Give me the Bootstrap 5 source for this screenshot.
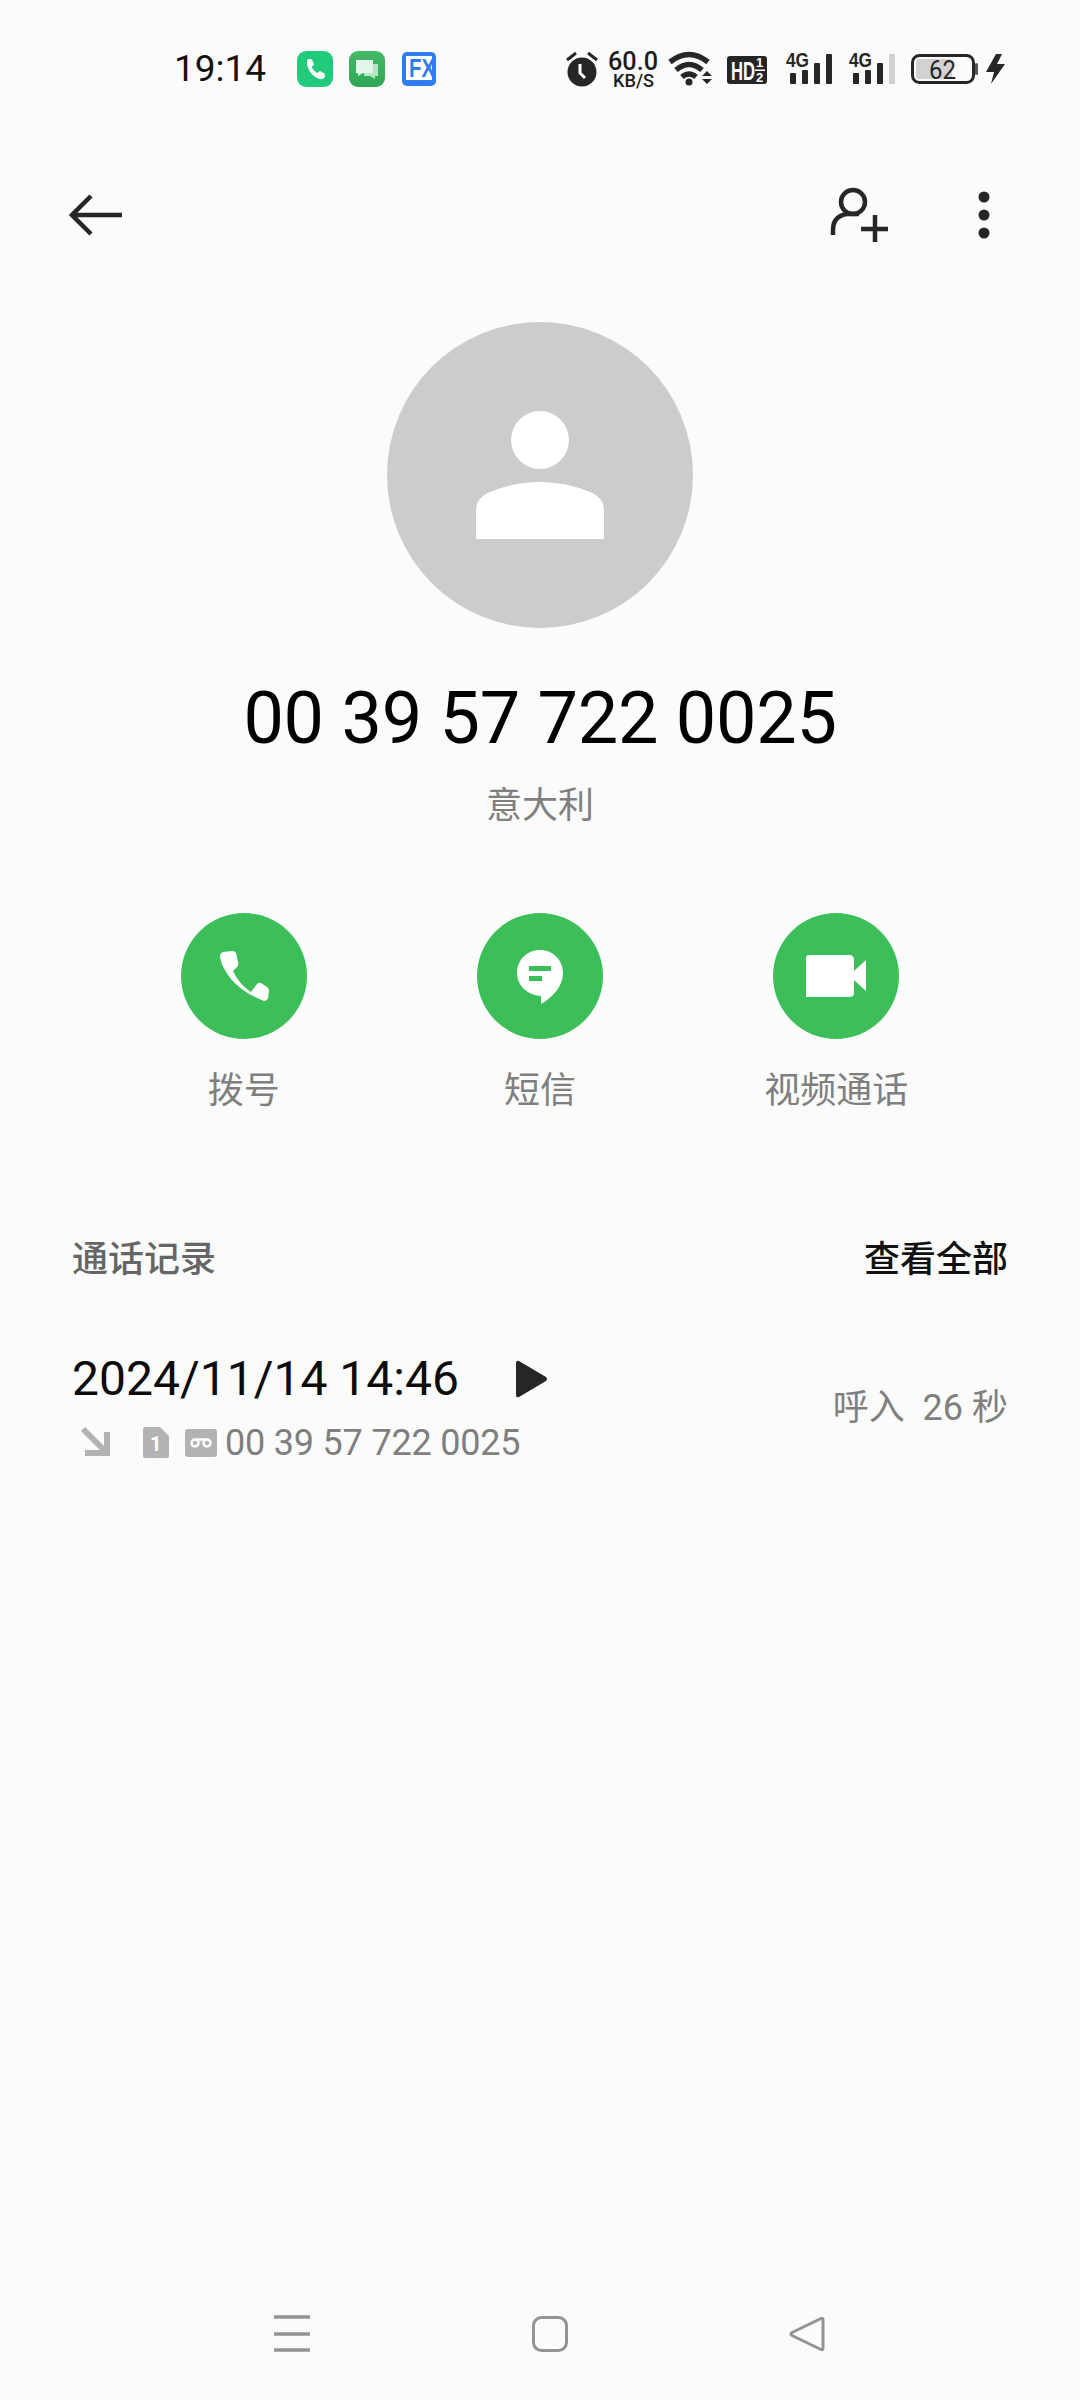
<!DOCTYPE html>
<html lang="zh-CN">
<head>
<meta charset="utf-8">
<title>通话详情</title>
<link href="https://cdn.jsdelivr.net/npm/bootstrap@5.3.0/dist/css/bootstrap.min.css" rel="stylesheet">
<style>
  :root { --ink: #000; --muted: #7f7f7f; --icon: #262626; --green: #3cbf58; }
  html, body { margin: 0; background: #fbfbfb; }
  body {
    width: 1080px; height: 2400px; overflow: hidden;
    font-family: Roboto, "Noto Sans CJK SC", sans-serif; color: var(--ink);
  }
  svg { display: block; flex: none; }
  .screen { height: 2400px; }

  /* status bar */
  .status-row { height: 80px; margin-top: 28px; padding: 0 70px 0 174px; }
  .clock { width: 94px; padding-top: 2px; font-size: 37px; line-height: 78px; color: #111; }
  .app-tray { margin-left: 29px; }
  .sys-tray { margin-left: auto; }
  .sb-rate { font: 500 25px Roboto, sans-serif; fill: #1c1c1c; }
  .sb-unit { font: 500 19px Roboto, sans-serif; fill: #1c1c1c; }
  .sb-net { font: 700 20px "Liberation Sans", sans-serif; fill: #262626; }
  .sb-hd { font: 700 25px "Liberation Sans", sans-serif; fill: #fff; }
  .sb-frac { font: 700 13px "Liberation Sans", sans-serif; fill: #fff; }
  .sb-batt { font: 400 26px Roboto, sans-serif; fill: #262626; }
  .sb-fx { font: 700 26px "Liberation Sans", sans-serif; fill: #2f7cf0; }

  /* toolbar */
  .tool-row { height: 80px; margin-top: 67px; padding: 0 90px 0 69px; }
  .tool-more { margin-left: 87px; }

  /* contact header */
  .face { width: 306px; height: 306px; margin: 67px auto 0; background: #cccccc; }
  .dial-number { font-size: 72px; line-height: 86px; margin-top: 48px; letter-spacing: -.25px; }
  .region { font-size: 36px; line-height: 50px; margin-top: 19px; color: var(--muted); }

  /* quick actions */
  .actions { margin-top: 82px; padding: 0 95.5px; }
  .action-disc { width: 126px; height: 126px; background: var(--green); }
  .action-label { font-size: 36px; line-height: 50px; margin-top: 27px; color: var(--muted); }

  /* call history */
  .history { padding: 0 72px; }
  .history-head { margin-top: 119px; font-size: 36px; line-height: 50px; font-weight: 500; }
  .history-title { color: #666; }
  .history-all { color: #111; }
  .log-entry { margin-top: 64px; }
  .log-when { font-size: 48px; line-height: 60px; color: #0c0c0c; }
  .log-play { margin-left: 56px; }
  .log-sub { margin-top: 12px; height: 44px; margin-left: 7px; }
  .log-sim { margin-left: 27px; }
  .log-mail { margin-left: 15px; }
  .log-number { font-size: 36px; line-height: 44px; color: var(--muted); margin-left: 8px; letter-spacing: -.2px; }
  .log-meta { font-size: 36px; line-height: 50px; color: var(--muted); white-space: pre; margin-top: 2px; }

  /* navigation keys */
  .nav-keys { margin-top: auto; height: 67px; margin-bottom: 34px; padding: 0 251px 0 270px; }
</style>
</head>
<body>
<div class="screen d-flex flex-column">

  <!-- status bar -->
  <div class="status-row d-flex align-items-center">
    <div class="clock">19:14</div>
    <div class="app-tray d-flex">
      <svg width="52" height="80" viewBox="297 28 52 80" aria-hidden="true">
        <rect x="297" y="51" width="36" height="36" rx="9" fill="#22cb7c"/>
        <path d="M307 60q1-1 3-1l2 .5 2 5-2.500 2.500q2 4 6 6l2.500-2 4.500 2.500.5 2q0 2-1.500 3-2 1-4 .5-6-2-10-8-3-6-2.500-9z" fill="#fff"/>
      </svg>
      <svg width="53" height="80" viewBox="349 28 53 80" aria-hidden="true">
        <defs><linearGradient id="chatFill" x1="0" y1="0" x2="0" y2="1"><stop offset="0" stop-color="#45bb68"/><stop offset="1" stop-color="#2ea655"/></linearGradient></defs>
        <rect x="349" y="51" width="36" height="36" rx="9" fill="url(#chatFill)"/>
        <path d="M364 64h14v12h-3v3l-5-3h-6z" fill="#b5e6c6"/>
        <path d="M356 60h17v13h-10l-5 3v-3h-2z" fill="#e3f6e9"/>
      </svg>
      <svg width="44" height="80" viewBox="402 28 44 80" role="img">
        <rect x="402" y="52" width="34" height="34" rx="5" fill="#2f7cf0"/>
        <rect x="406" y="56" width="26" height="24" fill="#fff"/>
        <text class="sb-fx" x="409" y="77" textLength="26" lengthAdjust="spacingAndGlyphs">FX</text>
      </svg>
    </div>
    <div class="sys-tray d-flex">
      <svg width="40" height="80" viewBox="565 28 40 80" aria-hidden="true">
        <circle cx="583" cy="72" r="14.500" fill="#262626"/>
        <path d="M568 60l9-7M598 60l-9-7" stroke="#262626" stroke-width="3" fill="none"/>
        <path d="M581 64v9l5 5" stroke="#fff" stroke-width="3" fill="none"/>
      </svg>
      <svg width="62" height="80" viewBox="605 28 62 80" role="img">
        <text class="sb-rate" x="609" y="70" textLength="50" lengthAdjust="spacingAndGlyphs">60.0</text>
        <text class="sb-unit" x="614" y="87" textLength="41" lengthAdjust="spacingAndGlyphs">KB/S</text>
      </svg>
      <svg width="59" height="80" viewBox="667 28 59 80" aria-hidden="true">
        <g fill="none" stroke="#262626" stroke-width="5.500">
          <path d="M671 62q19-15 38 0"/>
          <path d="M677 70q13-11 26 0"/>
          <path d="M683 77q7-6 14 0"/>
        </g>
        <circle cx="690" cy="82" r="3.500" fill="#262626"/>
        <path d="M703 76l5-5 5 5zM703 79h10l-5 5z" fill="#262626"/>
      </svg>
      <svg width="59" height="80" viewBox="726 28 59 80" role="img">
        <rect x="728" y="56" width="40" height="28" rx="3" fill="#262626"/>
        <text class="sb-hd" x="732" y="80" textLength="24" lengthAdjust="spacingAndGlyphs">HD</text>
        <text class="sb-frac" x="757" y="67">1</text>
        <text class="sb-frac" x="757" y="82">2</text>
        <rect x="756" y="69.500" width="10" height="1.500" fill="#fff"/>
      </svg>
      <svg width="63" height="80" viewBox="785 28 63 80" role="img">
        <text class="sb-net" x="787" y="67" textLength="23" lengthAdjust="spacingAndGlyphs">4G</text>
        <rect x="791" y="73" width="6" height="11" rx="1" fill="#262626"/>
        <rect x="803" y="70" width="6" height="14" rx="1" fill="#262626"/>
        <rect x="815" y="63" width="6" height="21" rx="1" fill="#262626"/>
        <rect x="827" y="54" width="6" height="30" rx="1" fill="#262626"/>
      </svg>
      <svg width="62" height="80" viewBox="848 28 62 80" role="img">
        <text class="sb-net" x="850" y="67" textLength="23" lengthAdjust="spacingAndGlyphs">4G</text>
        <rect x="854" y="73" width="6" height="11" rx="1" fill="#262626"/>
        <rect x="866" y="70" width="6" height="14" rx="1" fill="#262626"/>
        <rect x="878" y="63" width="6" height="21" rx="1" fill="#262626"/>
        <rect x="890" y="54" width="6" height="30" rx="1" fill="#d0d0d0"/>
      </svg>
      <svg width="75" height="80" viewBox="910 28 75 80" role="img">
        <rect x="913.500" y="55.500" width="61" height="27" rx="7" fill="none" stroke="#262626" stroke-width="3"/>
        <rect x="917" y="59" width="36" height="20" rx="3" fill="#d2d2d2"/>
        <rect x="976" y="63" width="3" height="12" rx="1.500" fill="#555"/>
        <text class="sb-batt" x="930" y="79" textLength="27" lengthAdjust="spacingAndGlyphs">62</text>
      </svg>
      <svg width="26" height="80" viewBox="985 28 26 80" aria-hidden="true">
        <path d="M997 54l-10 18h8l-3 12 14-20h-8l5-10z" fill="#262626"/>
      </svg>
    </div>
  </div>

  <!-- toolbar -->
  <div class="tool-row d-flex align-items-center justify-content-between">
    <svg width="56" height="48" viewBox="69 191 56 48" aria-hidden="true">
      <path d="M122 215H73M91 196l-19 19 19 19" fill="none" stroke="#262626" stroke-width="4.500"/>
    </svg>
    <div class="d-flex align-items-center">
      <svg width="62" height="60" viewBox="829 185 62 60" aria-hidden="true">
        <circle cx="853" cy="202" r="12" fill="none" stroke="#262626" stroke-width="4.500"/>
        <path d="M833 235v-5q0-14 14-16h12" fill="none" stroke="#262626" stroke-width="4.500"/>
        <path d="M875 215v27M861 229h27" fill="none" stroke="#262626" stroke-width="4.500"/>
      </svg>
      <svg class="tool-more" width="12" height="48" viewBox="978 191 12 48" aria-hidden="true">
        <circle cx="984" cy="197" r="5.500" fill="#262626"/>
        <circle cx="984" cy="215" r="5.500" fill="#262626"/>
        <circle cx="984" cy="233" r="5.500" fill="#262626"/>
      </svg>
    </div>
  </div>

  <!-- contact header -->
  <div class="face rounded-circle d-flex align-items-center justify-content-center">
    <svg width="306" height="306" viewBox="387 321 306 306" aria-hidden="true">
      <circle cx="540" cy="439" r="29" fill="#fff"/>
      <path d="M476 538v-29q0-12 14-18 24-10 50-10t50 10q14 6 14 18v29z" fill="#fff"/>
    </svg>
  </div>
  <div class="dial-number text-center">00 39 57 722 0025</div>
  <div class="region text-center">意大利</div>

  <!-- quick actions -->
  <div class="actions">
    <div class="row g-0">
      <div class="col-4 d-flex flex-column align-items-center">
        <div class="action-disc rounded-circle">
          <svg width="126" height="126" viewBox="180 913 126 126" aria-hidden="true">
            <path d="M222 952L231 951Q234 951 235 953L237 962Q238 965 236 967L232 971Q238 984 250 992L256 984Q258 982 260 983L266 987Q268 988 268 991L267 998Q266 1001 263 1001Q242 993 230 979Q220 966 219 957Q219 953 222 952Z" fill="#fff"/>
          </svg>
        </div>
        <div class="action-label">拨号</div>
      </div>
      <div class="col-4 d-flex flex-column align-items-center">
        <div class="action-disc rounded-circle">
          <svg width="126" height="126" viewBox="477 913 126 126" aria-hidden="true">
            <path d="M540 950c13 0 23 10 23 23 0 13-10 24-22 31v-8c-14-1-24-11-24-23 0-13 10-23 23-23z" fill="#fff"/>
            <path d="M529 966h22v5h-22zM529 976h13v5h-13z" fill="#3cbf58"/>
          </svg>
        </div>
        <div class="action-label">短信</div>
      </div>
      <div class="col-4 d-flex flex-column align-items-center">
        <div class="action-disc rounded-circle">
          <svg width="126" height="126" viewBox="773 913 126 126" aria-hidden="true">
            <path d="M809 955h40q5 0 5 5v33q0 4-5 4h-43v-39q0-3 3-3z" fill="#fff"/>
            <path d="M854 971l12-11v31l-12-11z" fill="#fff"/>
          </svg>
        </div>
        <div class="action-label">视频通话</div>
      </div>
    </div>
  </div>

  <!-- call history -->
  <div class="history">
    <div class="history-head d-flex justify-content-between">
      <span class="history-title">通话记录</span>
      <span class="history-all">查看全部</span>
    </div>
    <div class="log-entry d-flex justify-content-between align-items-center">
      <div>
        <div class="d-flex align-items-center">
          <span class="log-when">2024/11/14 14:46</span>
          <svg class="log-play" width="34" height="42" viewBox="514 1356 34 42" aria-hidden="true">
            <path d="M518 1359l27 16q2 2 0 4l-27 16q-3 1-3-2v-32q0-3 3-2z" fill="#262626"/>
          </svg>
        </div>
        <div class="log-sub d-flex align-items-center">
          <svg width="36" height="36" viewBox="79 1423 36 36" aria-hidden="true">
            <path d="M83 1427l23 23M85 1451h22v-21" fill="none" stroke="#b3b3b3" stroke-width="6"/>
          </svg>
          <svg class="log-sim" width="28" height="34" viewBox="142 1425 28 34" aria-hidden="true">
            <path d="M145 1426h15l9 9v20q0 2-2 2h-22q-2 0-2-2v-27q0-2 2-2z" fill="#b3b3b3"/>
            <text x="150" y="1450" font-family="Roboto, sans-serif" font-weight="700" font-size="20" fill="#fff">1</text>
          </svg>
          <svg class="log-mail" width="32" height="28" viewBox="185 1428 32 28" aria-hidden="true">
            <rect x="185" y="1428" width="32" height="28" rx="3" fill="#b3b3b3"/>
            <circle cx="195" cy="1442" r="3.500" fill="none" stroke="#fff" stroke-width="2.500"/>
            <circle cx="207" cy="1442" r="3.500" fill="none" stroke="#fff" stroke-width="2.500"/>
            <path d="M195 1438.500h12" stroke="#fff" stroke-width="2.500"/>
          </svg>
          <span class="log-number">00 39 57 722 0025</span>
        </div>
      </div>
      <div class="log-meta">呼入  26 秒</div>
    </div>
  </div>

  <!-- navigation keys -->
  <div class="nav-keys d-flex align-items-center justify-content-between">
    <svg width="44" height="44" viewBox="269 2311 44 44" aria-hidden="true">
      <path d="M273 2317h36M273 2334h36M273 2350h36" stroke="#939393" stroke-width="3.500" fill="none"/>
    </svg>
    <svg width="44" height="44" viewBox="527 2311 44 44" aria-hidden="true">
      <rect x="532.500" y="2317.500" width="33" height="33" rx="8" fill="none" stroke="#939393" stroke-width="3"/>
    </svg>
    <svg width="44" height="44" viewBox="785 2311 44 44" aria-hidden="true">
      <path d="M821 2318.500q2-1 2 1.500v28q0 2.500-2 1.500l-29-14q-2-1.500 0-3z" fill="none" stroke="#939393" stroke-width="3" stroke-linejoin="round"/>
    </svg>
  </div>
</div>
</body>
</html>
